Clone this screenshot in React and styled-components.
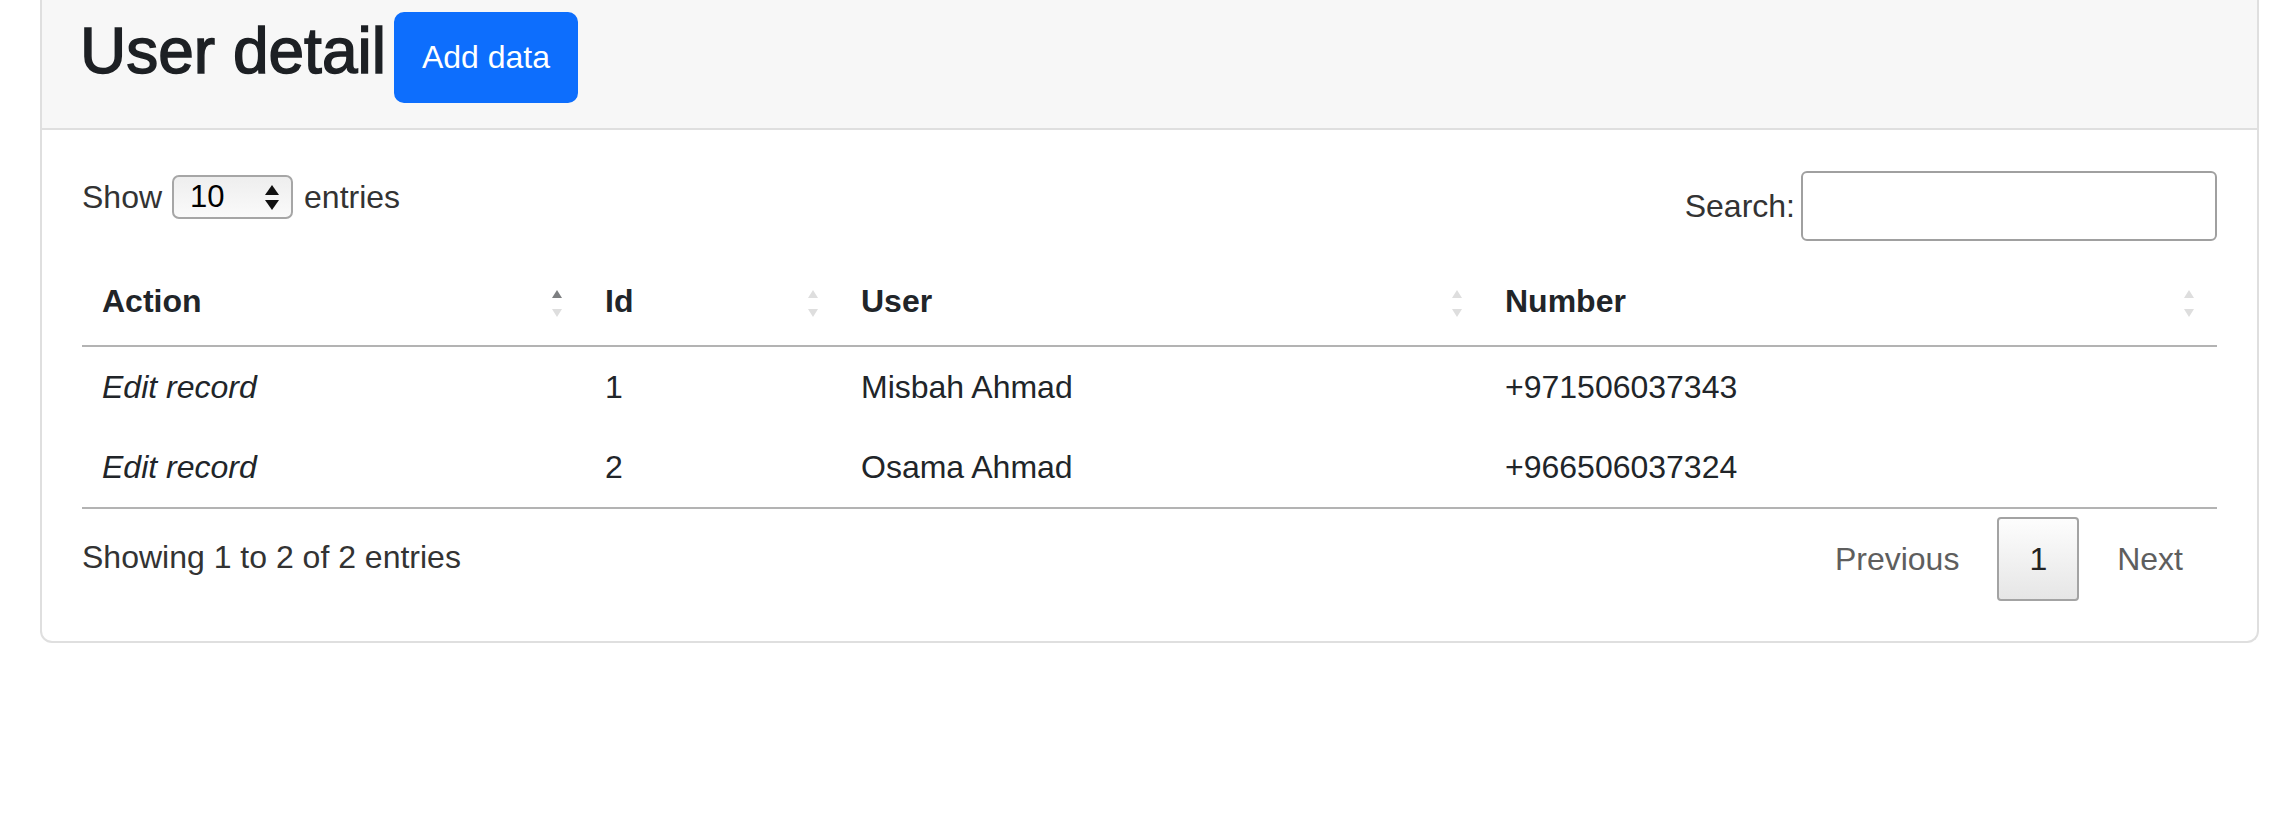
import styled, { createGlobalStyle } from "styled-components";

const GlobalStyle = createGlobalStyle`
  * { box-sizing: border-box; }
  html, body {
    margin: 0;
    padding: 0;
    background: #fff;
  }
  body {
    font-family: "Liberation Sans", Arial, sans-serif;
    font-size: 32px;
    line-height: 48px;
    color: #212529;
  }
`;

const Card = styled.section`
  margin-left: 40px;
  width: 2219px;
  background: #fff;
  border: 2px solid #dfdfdf;
  border-top: none;
  border-radius: 0 0 12px 12px;
`;

const CardHeader = styled.header`
  display: flex;
  align-items: flex-start;
  gap: 8px;
  padding: 12px 38px 25px;
  background: #f7f7f7;
  border-bottom: 2px solid #dfdfdf;
`;

const Title = styled.h2`
  margin: 1px 0 0;
  font-size: 64px;
  line-height: 77px;
  font-weight: 500;
  color: #1d2024;
  -webkit-text-stroke: 1.5px #1d2024;
`;

const PrimaryButton = styled.button`
  font-family: inherit;
  font-size: 32px;
  line-height: 47px;
  padding: 20px 26px;
  color: #fff;
  background: #0d6efd;
  border: 2px solid #0d6efd;
  border-radius: 10px;
  cursor: pointer;
`;

const CardBody = styled.div`
  padding: 41px 40px 40px;
`;

const Controls = styled.div`
  display: flex;
  justify-content: space-between;
  align-items: flex-start;
  height: 70px;
  color: #333;
`;

const LengthLabel = styled.label`
  display: flex;
  align-items: center;
  height: 48px;
  margin-top: 2px;
`;

const SelectBox = styled.div`
  display: flex;
  align-items: center;
  justify-content: space-between;
  width: 121px;
  height: 44px;
  margin: 0 11px 0 10px;
  padding: 0 12px 0 16px;
  font-size: 31px;
  color: #000;
  background: linear-gradient(to bottom, #eeeeee, #fafafa);
  border: 2px solid #a6a6a6;
  border-radius: 7px;
`;

const FilterLabel = styled.label`
  display: flex;
  align-items: center;
  gap: 6px;
`;

const SearchInput = styled.input`
  width: 416px;
  height: 70px;
  padding: 10px;
  font-family: inherit;
  font-size: 32px;
  border: 2px solid #a0a0a0;
  border-radius: 6px;
  background: #fff;
  outline: none;
`;

const Table = styled.table`
  width: 100%;
  margin-top: 16px;
  table-layout: fixed;
  border-collapse: separate;
  border-spacing: 0;

  tbody tr:last-child td {
    border-bottom: 2px solid #b3b3b3;
  }
`;

const Th = styled.th`
  padding: 20px;
  text-align: left;
  font-weight: bold;
  color: #212529;
  border-bottom: 2px solid #b3b3b3;
`;

const ThInner = styled.div`
  display: flex;
  align-items: center;
  justify-content: space-between;
  padding-right: 3px;
`;

const Td = styled.td`
  padding: 16px 20px;
  color: #212529;
  font-style: ${(p) => (p.$italic ? "italic" : "normal")};
`;

const Footer = styled.div`
  display: flex;
  justify-content: space-between;
  align-items: flex-start;
  color: #333;
`;

const Info = styled.div`
  padding-top: 24px;
`;

const Paginate = styled.div`
  display: flex;
  padding-top: 8px;
`;

const PageButton = styled.span`
  margin-left: 4px;
  padding: 16px ${(p) => (p.$current ? "30px" : "32px")};
  line-height: 48px;
  border: 2px solid ${(p) => (p.$current ? "#a3a3a3" : "transparent")};
  border-radius: 4px;
  color: ${(p) => (p.$current ? "#222" : "#5e5e5e")};
  background: ${(p) =>
    p.$current ? "linear-gradient(to bottom, #fdfdfd 0%, #e6e6e6 100%)" : "none"};
`;

function SortIcon({ active }) {
  return (
    <svg width="10" height="28" viewBox="0 0 10 28" style={{ marginTop: 5 }}>
      <polygon points="0,8 5,0 10,8" fill={active ? "#7d7f81" : "#dedede"} />
      <polygon points="0,19 10,19 5,27" fill="#dedede" />
    </svg>
  );
}

function SelectArrows() {
  return (
    <svg width="14" height="25" viewBox="0 0 14 25">
      <polygon points="0,10 7,0 14,10" fill="#111" />
      <polygon points="0,15 14,15 7,25" fill="#111" />
    </svg>
  );
}

const columns = [
  { label: "Action", width: 503, active: true },
  { label: "Id", width: 256 },
  { label: "User", width: 644 },
  { label: "Number", width: 732 },
];

const rows = [
  { id: 1, user: "Misbah Ahmad", number: "+971506037343" },
  { id: 2, user: "Osama Ahmad", number: "+966506037324" },
];

export default function App() {
  return (
    <>
      <GlobalStyle />
      <Card>
        <CardHeader>
          <Title>User detail</Title>
          <PrimaryButton type="button">Add data</PrimaryButton>
        </CardHeader>

        <CardBody>
          <Controls>
            <LengthLabel>
              Show
              <SelectBox>
                <span>10</span>
                <SelectArrows />
              </SelectBox>
              entries
            </LengthLabel>
            <FilterLabel>
              Search:
              <SearchInput type="search" />
            </FilterLabel>
          </Controls>

          <Table>
            <colgroup>
              {columns.map((c) => (
                <col key={c.label} style={{ width: c.width }} />
              ))}
            </colgroup>
            <thead>
              <tr>
                {columns.map((c) => (
                  <Th key={c.label}>
                    <ThInner>
                      <span>{c.label}</span>
                      <SortIcon active={c.active} />
                    </ThInner>
                  </Th>
                ))}
              </tr>
            </thead>
            <tbody>
              {rows.map((r) => (
                <tr key={r.id}>
                  <Td $italic>Edit record</Td>
                  <Td>{r.id}</Td>
                  <Td>{r.user}</Td>
                  <Td>{r.number}</Td>
                </tr>
              ))}
            </tbody>
          </Table>

          <Footer>
            <Info>Showing 1 to 2 of 2 entries</Info>
            <Paginate>
              <PageButton>Previous</PageButton>
              <PageButton $current>1</PageButton>
              <PageButton>Next</PageButton>
            </Paginate>
          </Footer>
        </CardBody>
      </Card>
    </>
  );
}
